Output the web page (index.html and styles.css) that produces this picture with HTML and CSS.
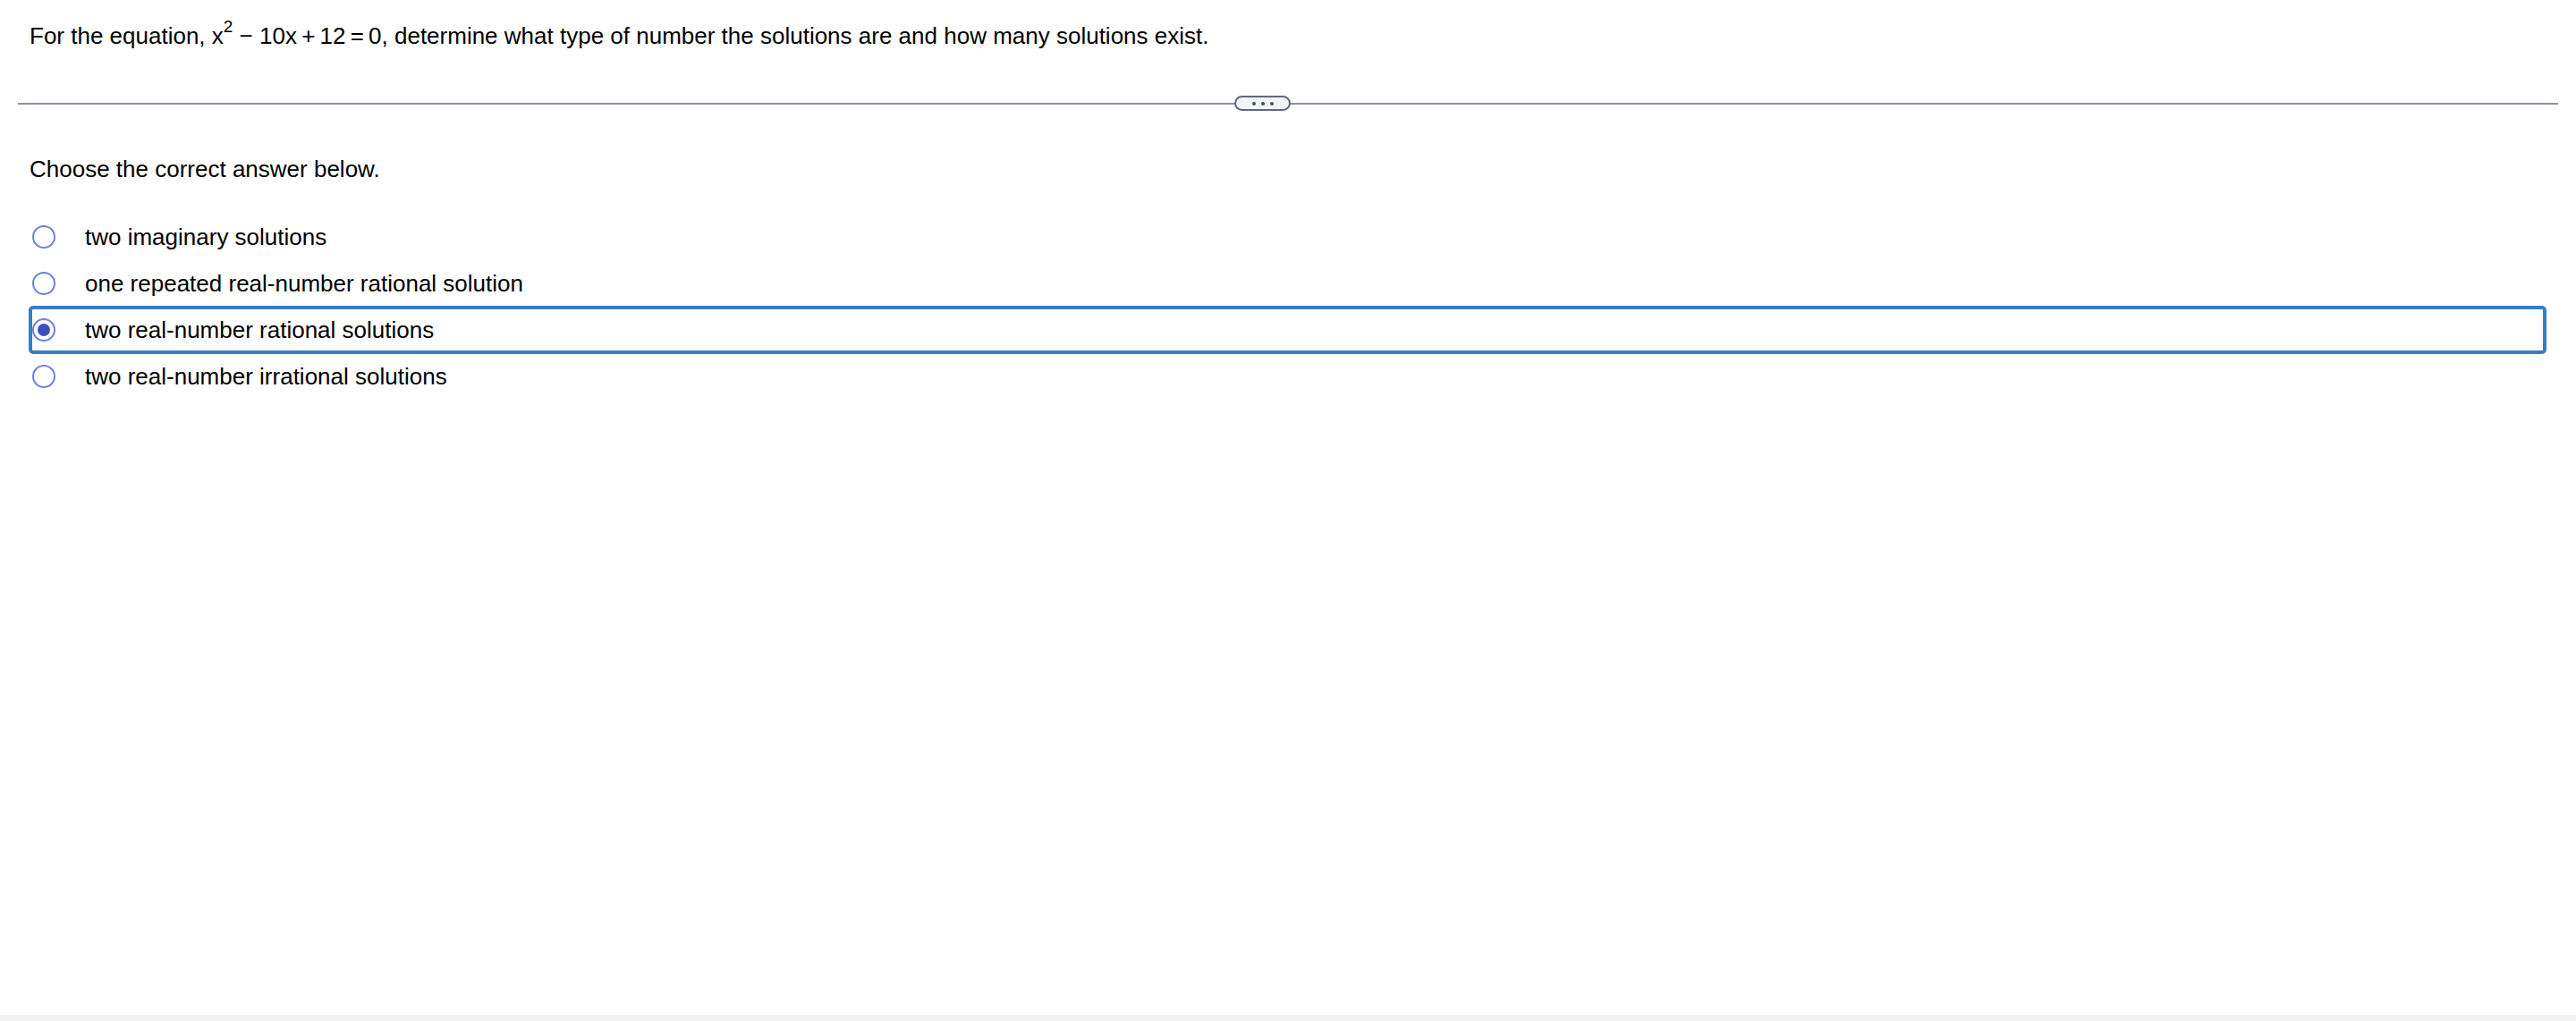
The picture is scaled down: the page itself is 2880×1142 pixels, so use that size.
FILE: index.html
```html
<!DOCTYPE html>
<html>
<head>
<meta charset="utf-8">
<link rel="stylesheet" href="styles.css">
</head>
<body>
<div class="page">
  <div class="question">For the equation, <span class="math">x<sup>2</sup> − 10x&#8201;+&#8201;12&#8201;=&#8201;0</span>, determine what type of number the solutions are and how many solutions exist.</div>
  <div class="divider"><span class="pill"><i></i><i></i><i></i></span></div>
  <div class="prompt">Choose the correct answer below.</div>
  <ul class="options">
    <li class="option"><span class="radio"></span><span class="label">two imaginary solutions</span></li>
    <li class="option"><span class="radio"></span><span class="label">one repeated real-number rational solution</span></li>
    <li class="option selected"><span class="radio"></span><span class="label">two real-number rational solutions</span></li>
    <li class="option"><span class="radio"></span><span class="label">two real-number irrational solutions</span></li>
  </ul>
</div>
<div class="footer"></div>
</body>
</html>
```
FILE: styles.css
```css
html, body {
  margin: 0;
  padding: 0;
  background: #fff;
}
body {
  font-family: "Liberation Sans", Arial, sans-serif;
  font-size: 26px;
  color: #000;
  height: 1142px;
  display: flex;
  flex-direction: column;
}
.page {
  flex: 1;
}
.question {
  box-sizing: border-box;
  padding: 25px 33px 0;
  line-height: 30px;
  height: 115px;
}
.question sup {
  font-size: 19px;
  line-height: 0;
  position: relative;
  top: -3px;
}
.divider {
  position: relative;
  margin: 0 20px;
  height: 2px;
  background: #8a909c;
}
.pill {
  position: absolute;
  left: 1360px;
  top: -8px;
  width: 59px;
  height: 13px;
  border: 2px solid #5f6b7a;
  border-radius: 9px;
  background: #f3f4f6;
  display: flex;
  align-items: center;
  justify-content: center;
  gap: 6px;
}
.pill i {
  width: 4px;
  height: 4px;
  border-radius: 50%;
  background: #4a5260;
}
.prompt {
  padding: 57px 33px 0;
  line-height: 30px;
  height: 30px;
}
.options {
  list-style: none;
  margin: 0;
  padding: 36px 33px 0 32px;
}
.option {
  box-sizing: border-box;
  height: 54px;
  margin: -2px 0;
  border: 4px solid transparent;
  border-radius: 5px;
  display: flex;
  align-items: center;
}
.option.selected {
  border-color: #3a7bc8;
}
.radio {
  box-sizing: border-box;
  width: 26px;
  height: 26px;
  border: 2px solid #7282d8;
  border-radius: 50%;
  flex: none;
  display: flex;
  align-items: center;
  justify-content: center;
}
.selected .radio::after {
  content: "";
  width: 14px;
  height: 14px;
  border-radius: 50%;
  background: #3a4fc4;
}
.label {
  margin-left: 33px;
  line-height: 30px;
}
.footer {
  height: 7px;
  background: #f2f2f2;
}
```
